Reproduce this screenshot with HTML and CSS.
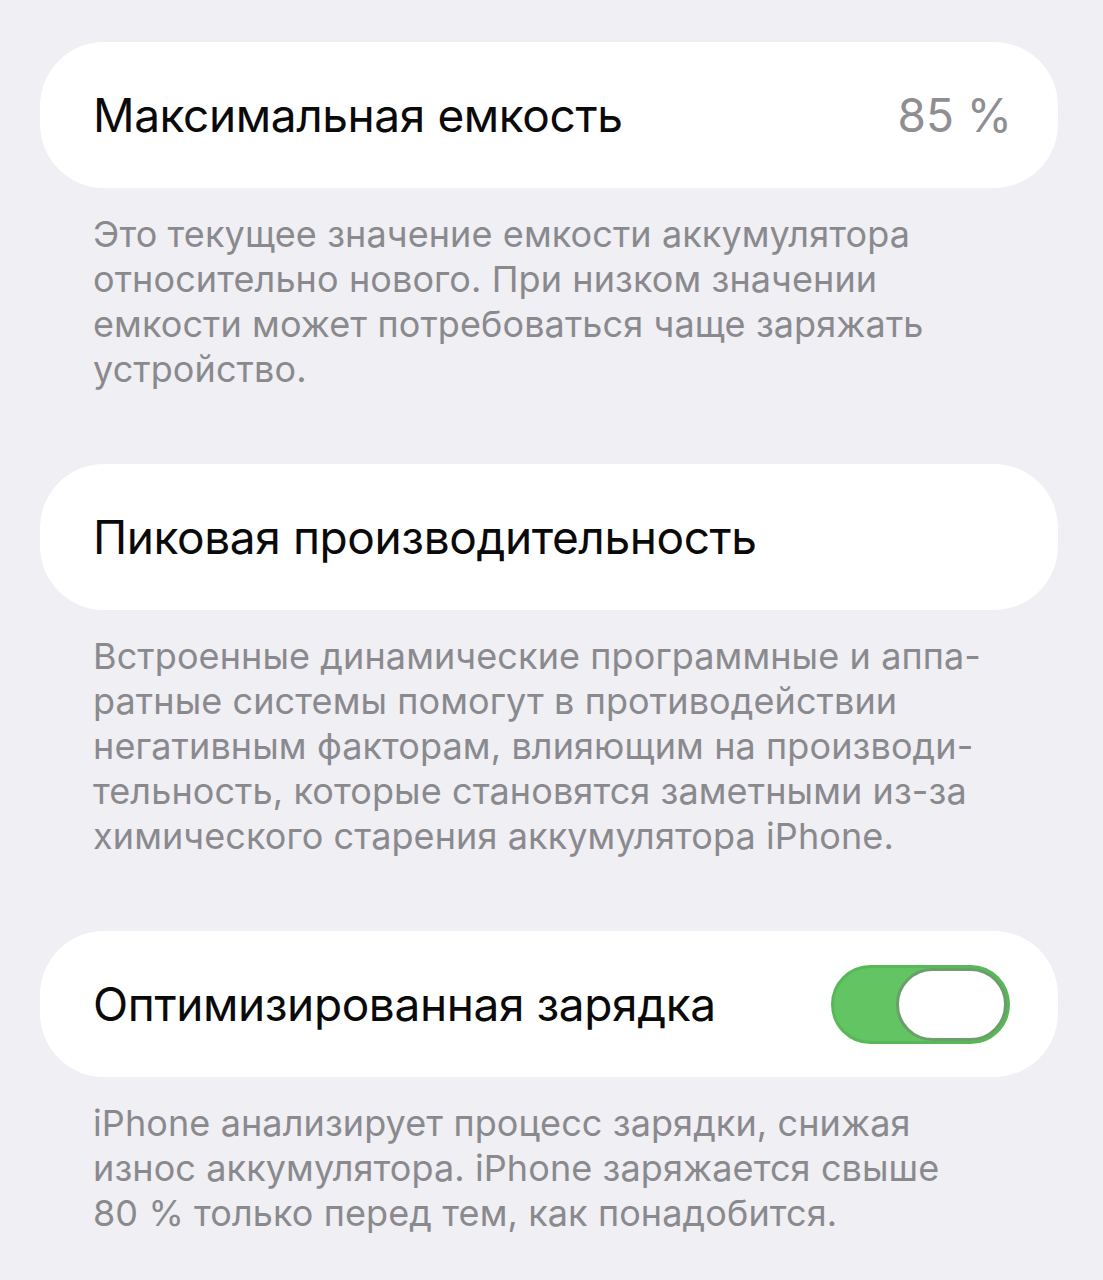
FILE: index.html
```html
<!DOCTYPE html>
<html lang="ru">
<head>
    <meta charset="UTF-8">
    <meta name="viewport" content="width=device-width, initial-scale=1.0">
    <title>Аккумулятор</title>
    <link rel="stylesheet" href="styles.css">
</head>
<body>
    <div class="settings">
        <div class="group">
            <div class="cell">
                <span class="cell-title">Максимальная емкость</span>
                <span class="cell-value">85 %</span>
            </div>
            <p class="group-footer">Это текущее значение емкости аккумулятора<br>относительно нового. При низком значении<br>емкости может потребоваться чаще заряжать<br>устройство.</p>
        </div>
        <div class="group">
            <div class="cell">
                <span class="cell-title">Пиковая производительность</span>
            </div>
            <p class="group-footer">Встроенные динамические программные и аппа-<br>ратные системы помогут в противодействии<br>негативным факторам, влияющим на производи-<br>тельность, которые становятся заметными из-за<br>химического старения аккумулятора iPhone.</p>
        </div>
        <div class="group">
            <div class="cell">
                <span class="cell-title">Оптимизированная зарядка</span>
                <span class="switch on"><span class="knob"></span></span>
            </div>
            <p class="group-footer">iPhone анализирует процесс зарядки, снижая<br>износ аккумулятора. iPhone заряжается свыше<br>80 % только перед тем, как понадобится.</p>
        </div>
    </div>
</body>
</html>
```

FILE: styles.css
```css
body {
    margin: 0;
    background-color: #efeff4;
    font-family: Inter, "Noto Sans", sans-serif;
    -webkit-font-smoothing: antialiased;
}
.settings {
    padding: 42px 45px 0 40px;
    display: flex;
    flex-direction: column;
    gap: 72px;
}
.cell {
    height: 146px;
    background: #ffffff;
    border-radius: 64px;
    display: flex;
    align-items: center;
    justify-content: space-between;
    padding: 0 46px 0 53px;
    box-sizing: border-box;
}
.cell-title {
    font-size: 46px;
    color: #0a0a0a;
    letter-spacing: -0.4px;
}
.cell-value {
    font-size: 46px;
    color: #8e8e93;
}
.group-footer {
    margin: 24px 0 0 0;
    padding-left: 53px;
    font-size: 36px;
    letter-spacing: 0.1px;
    line-height: 45px;
    color: #8a8a8e;
}
.switch {
    width: 179px;
    height: 79px;
    border-radius: 40px;
    background: #62c462;
    border: 3px solid #58b858;
    box-sizing: border-box;
    display: flex;
    align-items: center;
    justify-content: flex-end;
    margin-right: 2px;
}
.switch .knob {
    width: 111px;
    height: 73px;
    border-radius: 37px;
    background: #ffffff;
    border: 3px solid #6a9e6a;
    box-sizing: border-box;
}
```
